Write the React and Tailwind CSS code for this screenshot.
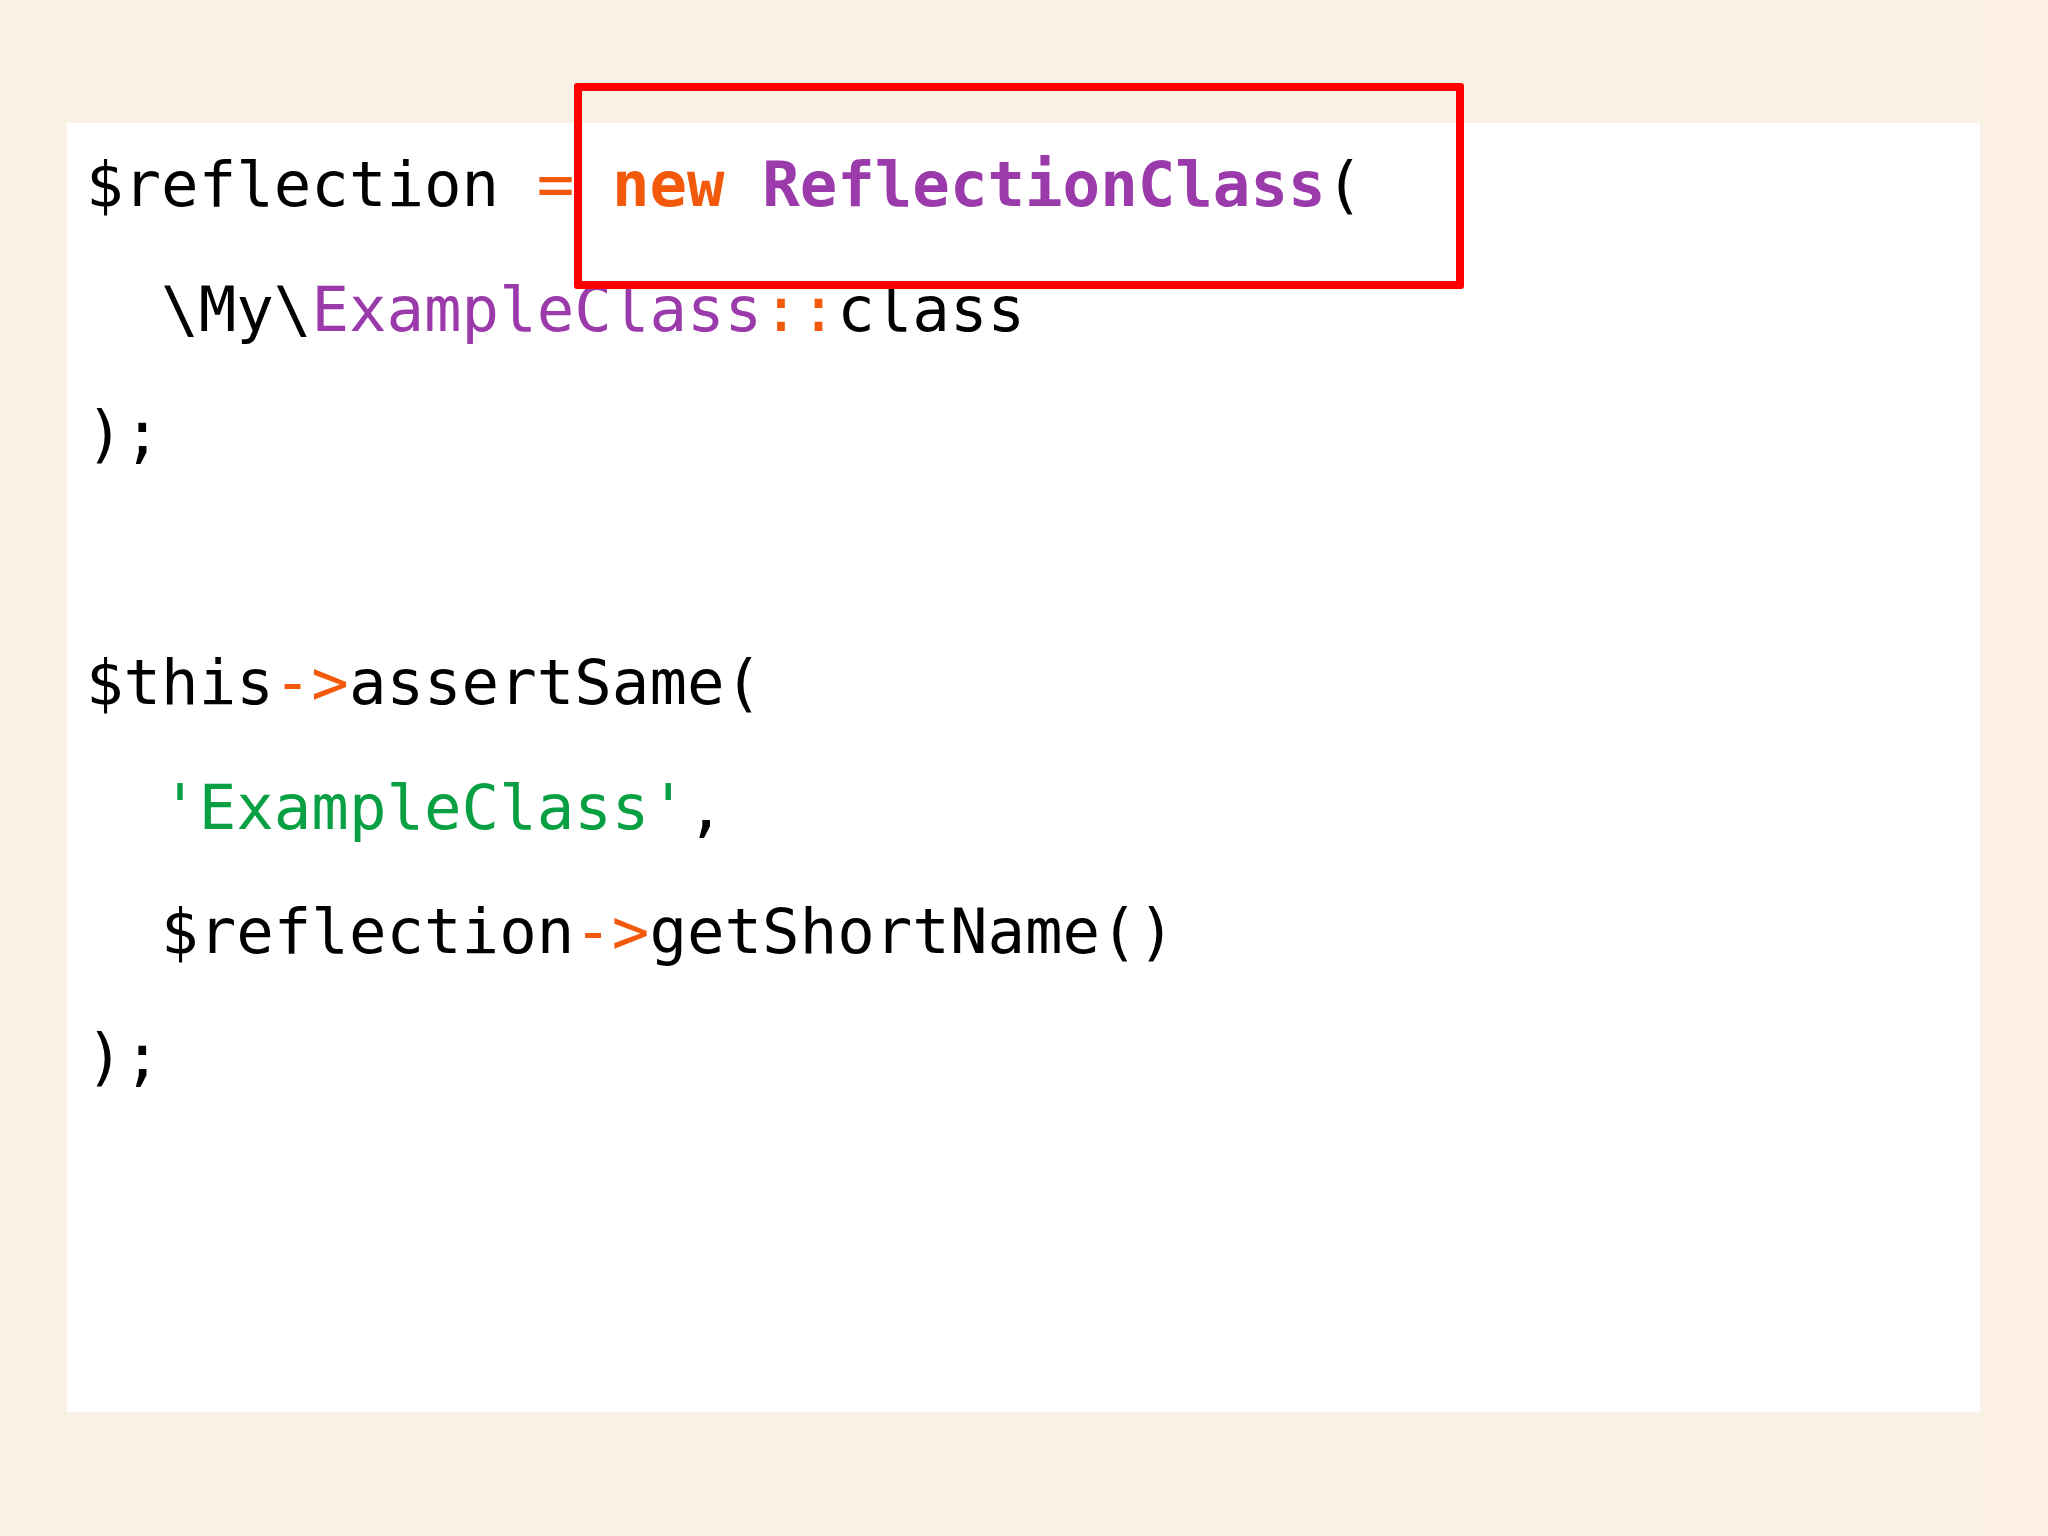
import React from 'react';

const O = 'text-[#f3590b]';
const P = 'text-[#9b3aab]';
const G = 'text-[#08a043]';

const lines = [
  [['$reflection '], ['=', O], [' '], ['new', O + ' font-bold'], [' '], ['ReflectionClass', P + ' font-bold'], ['(']],
  [['  \\My\\'], ['ExampleClass', P], ['::', O], ['class']],
  [[');']],
  [['']],
  [['$this'], ['->', O], ['assertSame(']],
  [['  '], ["'ExampleClass'", G], [',']],
  [['  $reflection'], ['->', O], ['getShortName()']],
  [[');']],
];

export default function App() {
  return (
    <div className="relative flex w-[2048px] h-[1536px] bg-[#faf1e6]">
      <div className="flex-1 pt-[123px] pl-[67px]">
        <div className="w-[1913px] h-[1289px] bg-white pl-[19px]">
          <div className="font-['DejaVu_Sans_Mono',monospace] text-[62.4px] leading-[124.5px] text-black whitespace-pre">
            {lines.map((segs, i) => (
              <div key={i} className="h-[124.5px]">
                {segs.map(([t, c], j) => (
                  <span key={j} className={c}>{t}</span>
                ))}
              </div>
            ))}
          </div>
        </div>
      </div>
      <div className="w-[63px] bg-[#fdf0e5]" />

      {/* highlight box */}
      <div className="absolute left-[574px] top-[83px] w-[890px] h-[206px] border-[8px] border-[#ff0000] rounded-[3px]" />
    </div>
  );
}
